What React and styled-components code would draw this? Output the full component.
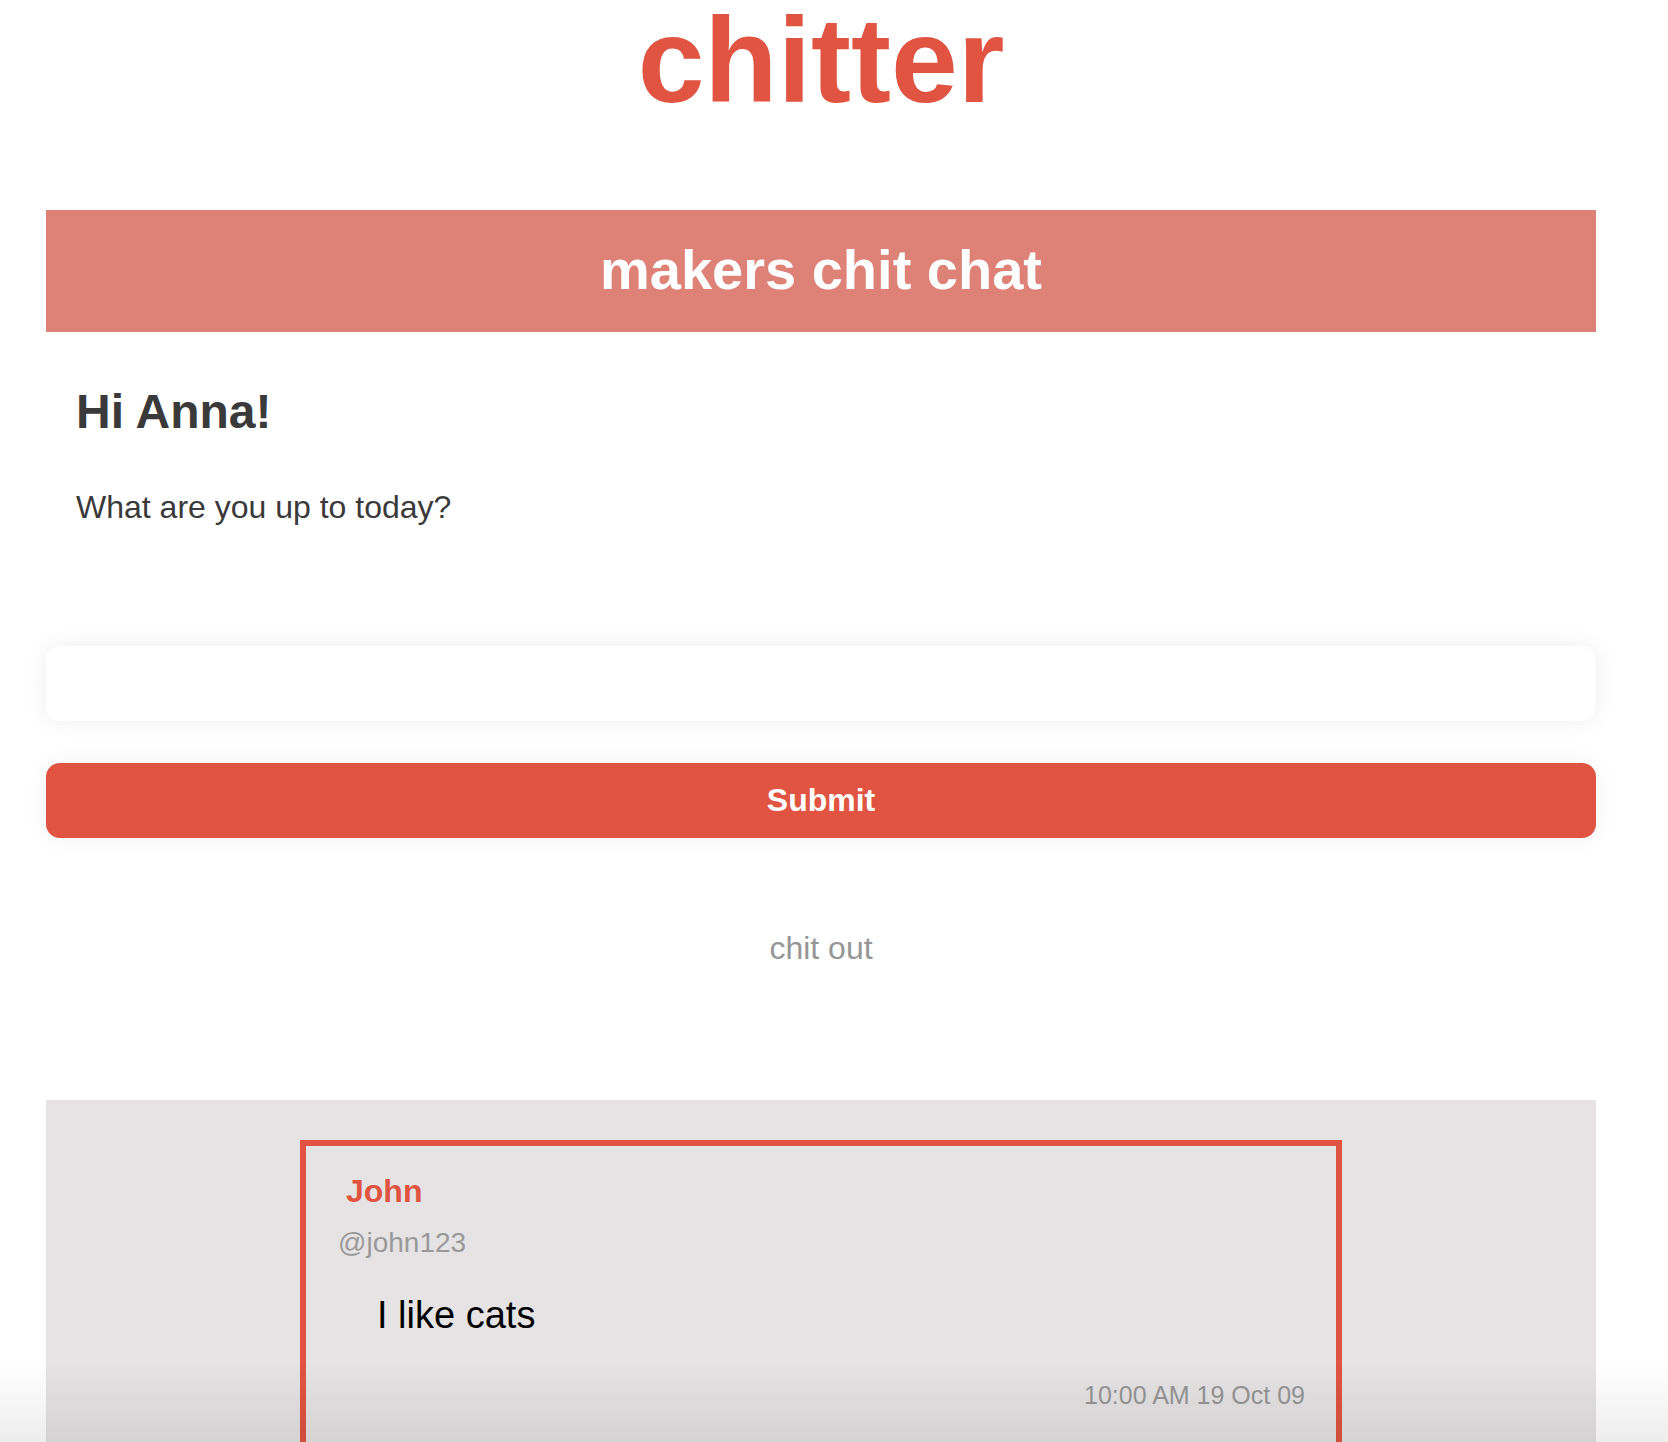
import React from 'react'
import styled, { createGlobalStyle } from 'styled-components'

const GlobalStyle = createGlobalStyle`
    html, body {
        margin: 0;
        padding: 0;
        background: #ffffff;
        font-family: 'Liberation Sans', Helvetica, Arial, sans-serif;
    }
`

const red = '#e05441'

const Page = styled.div`
    width: 1550px;
    margin-left: 46px;
    display: flex;
    flex-direction: column;
`

const Logo = styled.h1`
    margin: 0;
    font-size: 120px;
    line-height: 120px;
    font-weight: 700;
    color: ${red};
    text-align: center;
`

const Banner = styled.div`
    margin-top: 90px;
    height: 122px;
    box-sizing: border-box;
    padding-bottom: 4px;
    background: #de8176;
    display: flex;
    align-items: center;
    justify-content: center;
    color: #ffffff;
    font-size: 56px;
    font-weight: 700;
`

const Welcome = styled.section`
    padding-left: 30px;
    color: #3a3a3a;
`

const Greeting = styled.h2`
    margin: 56px 0 0;
    font-size: 48px;
    line-height: 48px;
    font-weight: 700;
`

const Prompt = styled.p`
    margin: 55px 0 0;
    font-size: 32px;
    line-height: 32px;
`

const Form = styled.form`
    display: flex;
    flex-direction: column;
    margin-top: 123px;
    gap: 42px;
`

const PeepInput = styled.input`
    height: 75px;
    box-sizing: border-box;
    border: none;
    border-radius: 14px;
    background: #ffffff;
    box-shadow: 0 0 22px rgba(0, 0, 0, 0.07);
    font-family: inherit;
    font-size: 28px;
    padding: 0 24px;
    outline: none;
`

const SubmitButton = styled.button`
    height: 75px;
    border: none;
    border-radius: 14px;
    background: ${red};
    box-shadow: 0 0 22px rgba(0, 0, 0, 0.06);
    color: #ffffff;
    font-family: inherit;
    font-size: 32px;
    font-weight: 700;
    cursor: pointer;
`

const SectionTitle = styled.div`
    margin-top: 94px;
    font-size: 32px;
    line-height: 32px;
    color: #969696;
    text-align: center;
`

const Feed = styled.section`
    margin-top: 136px;
    background: #e5e3e4;
    padding: 40px 0 60px;
    display: flex;
    flex-direction: column;
    align-items: center;
`

const PeepCard = styled.article`
    width: 1042px;
    box-sizing: border-box;
    border: 6px solid ${red};
    padding: 29px 31px 40px 32px;
    display: flex;
    flex-direction: column;
`

const Author = styled.div`
    padding-left: 8px;
    font-size: 32px;
    line-height: 32px;
    font-weight: 700;
    color: ${red};
`

const Handle = styled.div`
    margin-top: 22px;
    font-size: 28px;
    line-height: 28px;
    color: #999999;
`

const Message = styled.div`
    margin-top: 39px;
    padding-left: 39px;
    font-size: 38px;
    line-height: 38px;
    color: #000000;
`

const Timestamp = styled.div`
    margin-top: 49px;
    font-size: 25px;
    line-height: 25px;
    color: #969696;
    text-align: right;
`

const BottomFade = styled.div`
    position: fixed;
    left: 0;
    right: 0;
    bottom: 0;
    height: 80px;
    pointer-events: none;
    background: linear-gradient(rgba(0, 0, 0, 0), rgba(0, 0, 0, 0.07));
`

const peeps = [
    {
        name: 'John',
        username: 'john123',
        text: 'I like cats',
        time: '10:00 AM 19 Oct 09',
    },
]

const App = () => {
    return (
        <>
            <GlobalStyle />
            <Page>
                <Logo>chitter</Logo>
                <Banner>makers chit chat</Banner>
                <Welcome>
                    <Greeting>Hi Anna!</Greeting>
                    <Prompt>What are you up to today?</Prompt>
                </Welcome>
                <Form onSubmit={(e) => e.preventDefault()}>
                    <PeepInput type="text" />
                    <SubmitButton type="submit">Submit</SubmitButton>
                </Form>
                <SectionTitle>chit out</SectionTitle>
                <Feed>
                    {peeps.map((peep) => (
                        <PeepCard key={peep.username}>
                            <Author>{peep.name}</Author>
                            <Handle>@{peep.username}</Handle>
                            <Message>{peep.text}</Message>
                            <Timestamp>{peep.time}</Timestamp>
                        </PeepCard>
                    ))}
                </Feed>
            </Page>
            <BottomFade />
        </>
    )
}

export default App
